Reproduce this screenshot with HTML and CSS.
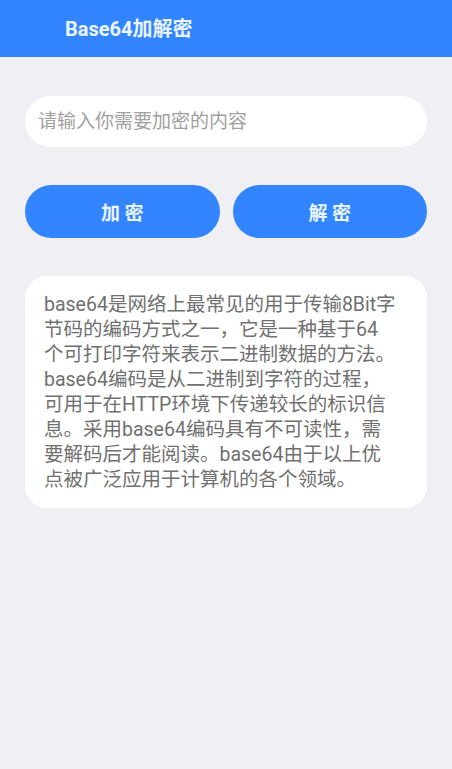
FILE: index.html
```html
<!DOCTYPE html>
<html lang="zh-CN">

<head>
	<meta charset="UTF-8">
	<title>Base64加解密</title>
	<link rel="stylesheet" href="styles.css">
</head>

<body>
	<div class="title-bar">
		<span class="title">Base64加解密</span>
	</div>
	<div class="content">
		<input class="input-box" type="text" placeholder="请输入你需要加密的内容">
		<div class="buttons">
			<button class="btn" id="encode">加 密</button>
			<button class="btn" id="decode">解 密</button>
		</div>
		<div class="card">
			<p class="desc">base64是网络上最常见的用于传输8Bit字<br>节码的编码方式之一，它是一种基于64<br>个可打印字符来表示二进制数据的方法。<br>base64编码是从二进制到字符的过程，<br>可用于在HTTP环境下传递较长的标识信<br>息。采用base64编码具有不可读性，需<br>要解码后才能阅读。base64由于以上优<br>点被广泛应用于计算机的各个领域。</p>
		</div>
	</div>
</body>

</html>
```

FILE: styles.css
```css
body {
	margin: 0;
	background-color: #efeff4;
	font-family: "Roboto", "Noto Sans CJK SC", sans-serif;
}

.title-bar {
	height: 57px;
	background-color: #3385ff;
	display: flex;
	align-items: center;
	padding-left: 65px;
}
.title {
	color: #eaf5ff;
	font-size: 20px;
	font-weight: bold;
	margin-top: -2px;
}

.content {
	padding: 39px 25px 0;
}

.input-box {
	box-sizing: border-box;
	display: block;
	width: 100%;
	height: 51px;
	border: none;
	border-radius: 26px;
	background-color: #fff;
	padding: 0 13px;
	font-family: inherit;
	font-size: 19px;
	outline: none;
}
.input-box::placeholder {
	color: #a0a0a0;
}

.buttons {
	display: flex;
	gap: 13px;
	margin-top: 38px;
}
.btn {
	flex: 1;
	height: 53px;
	border: none;
	border-radius: 27px;
	background-color: #3385ff;
	color: #eaf5ff;
	font-family: inherit;
	font-size: 19px;
	font-weight: bold;
	padding: 0;
}

.card {
	margin-top: 38px;
	background-color: #fff;
	border-radius: 22px;
	padding: 16px 19px;
}
.desc {
	margin: 0;
	color: #707070;
	font-size: 19.5px;
	line-height: 25px;
	white-space: nowrap;
}
```
